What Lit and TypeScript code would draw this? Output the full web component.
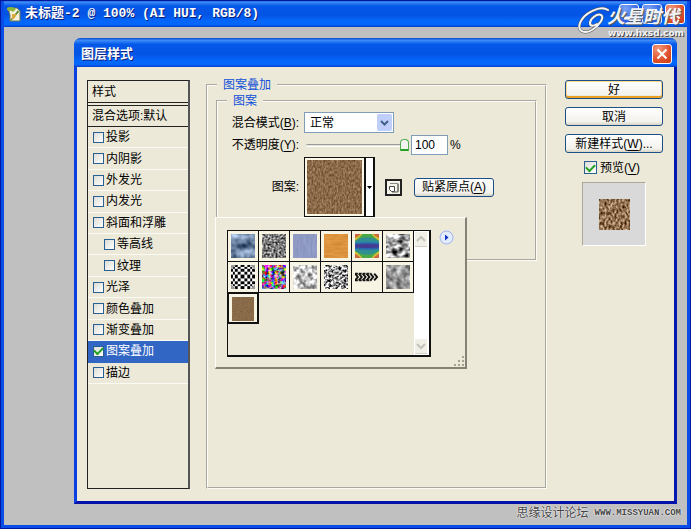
import { LitElement, html, css, svg, nothing } from "lit";
import { customElement, property, state } from "lit/decorators.js";
import { classMap } from "lit/directives/class-map.js";

/** Noise parameters: frequency, seed, then gain and mean per channel. */
interface Noise {
  freq: string;
  seed: number;
  gain: number;
  mean: [number, number, number];
  color?: boolean;
}

const NOISES: Record<string, Noise> = {
  burlap: { freq: "0.6 0.35", seed: 4, gain: 0.45, mean: [0.54, 0.42, 0.28] },
  weave: { freq: "0.5 0.3", seed: 9, gain: 1.1, mean: [0.57, 0.44, 0.32] },
  brown: { freq: "0.7", seed: 2, gain: 0.15, mean: [0.53, 0.42, 0.29] },
  bubbles: { freq: "0.13", seed: 5, gain: 0.9, mean: [0.42, 0.51, 0.64] },
  gravel: { freq: "0.5", seed: 3, gain: 1.5, mean: [0.48, 0.48, 0.48] },
  denim: { freq: "0.5 0.1", seed: 1, gain: 0.12, mean: [0.56, 0.6, 0.77] },
  wood: { freq: "0.1 0.5", seed: 1, gain: 0.14, mean: [0.86, 0.58, 0.24] },
  stones: { freq: "0.15 0.2", seed: 8, gain: 2.2, mean: [0.62, 0.62, 0.62] },
  confetti: { freq: "0.3", seed: 6, gain: 2.6, mean: [0.55, 0.45, 0.55], color: true },
  pebbles: { freq: "0.2", seed: 7, gain: 1.7, mean: [0.76, 0.76, 0.76] },
  scribble: { freq: "0.4", seed: 11, gain: 2.6, mean: [0.6, 0.6, 0.6] },
  fog: { freq: "0.18", seed: 12, gain: 0.9, mean: [0.6, 0.6, 0.6] },
};

@customElement("pattern-swatch")
class PatternSwatch extends LitElement {
  @property() kind = "burlap";

  static styles = css`
    :host { display: block; }
    svg { display: block; width: 100%; height: 100%; }
  `;

  private noise(n: Noise) {
    const rows = n.mean
      .map((m, i) => {
        const w = [0, 0, 0];
        w[n.color ? i : 0] = n.gain;
        return `${w.join(" ")} 0 ${(m - n.gain / 2).toFixed(2)}`;
      })
      .join(" ");
    return svg`
      <filter id="f" x="0" y="0" width="100%" height="100%" color-interpolation-filters="sRGB">
        <feTurbulence type="fractalNoise" baseFrequency=${n.freq} numOctaves="2" seed=${n.seed}/>
        <feColorMatrix values=${rows + " 0 0 0 0 1"}/>
      </filter>
      <rect width="100%" height="100%" filter="url(#f)"/>`;
  }

  private drawn() {
    if (this.kind === "checker") {
      const xs = [0, 2, 4, 7, 10, 14, 17, 20, 22, 25];
      const cells = [];
      for (let r = 0; r < 9; r++)
        for (let c = 0; c < 9; c++)
          if ((r + c) % 2 === 0)
            cells.push(svg`<rect x=${xs[c]} y=${xs[r]} width=${xs[c + 1] - xs[c]} height=${xs[r + 1] - xs[r]}/>`);
      return svg`<rect width="25" height="25" fill="#fff"/>${cells}
        <path d="M0 0H5L0 5ZM25 0V5L20 0ZM0 25V20L5 25ZM25 25H20L25 20Z" fill="#999"/>`;
    }
    if (this.kind === "rainbow")
      return svg`
        <defs><filter id="b" x="0" y="0" width="100%" height="100%"><feGaussianBlur stdDeviation="0.8"/></filter></defs>
        <rect width="25" height="25" fill="#2f8f94"/>
        <g filter="url(#b)">
          <path d="M-2-2H27V9Q12.500-2-2 9ZM-2 27H27V16Q12.500 27-2 16Z" fill="#4ca84a"/>
          <path d="M-2-2H9Q6 4-2 8ZM27-2H16Q19 4 27 8ZM-2 27H9Q6 21-2 17ZM27 27H16Q19 21 27 17Z" fill="#d0c03a"/>
          <path d="M-2-2H7Q5 3-2 5ZM27-2H18Q20 3 27 5ZM-2 27H7Q5 22-2 20ZM27 27H18Q20 22 27 20Z" fill="#d0683c"/>
          <path d="M-2 10Q12.500 7 27 10V15Q12.500 18-2 15Z" fill="#2b66b0"/>
          <path d="M-2 11Q12.500 10 27 11V14Q12.500 15-2 14Z" fill="#443a90"/>
        </g>`;
    const marks = [0, 4, 8, 12, 16, 20].map(
      (x) => svg`<path d=${`M${x} 9L${x + 3} 12.500L${x} 16`}/>`
    );
    return svg`<g fill="none" stroke="#111" stroke-width="2">${marks}
      <path d="M0 9H17M0 16H17" stroke-dasharray="3 1"/></g>`;
  }

  render() {
    const n = NOISES[this.kind];
    return n
      ? html`<svg aria-hidden="true">${this.noise(n)}</svg>`
      : html`<svg viewBox="0 0 25 25" aria-hidden="true">${this.drawn()}</svg>`;
  }
}

@customElement("caption-button")
class CaptionButton extends LitElement {
  @property() kind: "min" | "max" | "close" = "close";

  static styles = css`
    :host { display: block; }
    button {
      display: block; width: 20px; height: 20px; padding: 0;
      border: 1px solid #fff; border-radius: 3px;
      background: radial-gradient(circle at 30% 20%, #7da4f6, #2c5fe0 70%, #2450c8);
    }
    .close { background: radial-gradient(circle at 30% 20%, #f0997c, #e0502c 60%, #c63a14); }
    svg { display: block; width: 18px; height: 18px; }
  `;

  render() {
    const shape = {
      min: svg`<path d="M4 13h7" stroke-width="3"/>`,
      max: svg`<path d="M4 5h10M4.500 5v9h9V5" stroke-width="2"/>`,
      close: svg`<path d="M4.500 4.500l9 9M13.500 4.500l-9 9" stroke-width="2"/>`,
    }[this.kind];
    const label = { min: "最小化", max: "最大化", close: "关闭" }[this.kind];
    return html`<button class=${this.kind} aria-label=${label}>
      <svg viewBox="0 0 18 18" fill="none" stroke="#fff">${shape}</svg>
    </button>`;
  }
}

interface Effect {
  name: string;
  sub?: boolean;
}

const EFFECTS: Effect[] = [
  { name: "投影" },
  { name: "内阴影" },
  { name: "外发光" },
  { name: "内发光" },
  { name: "斜面和浮雕" },
  { name: "等高线", sub: true },
  { name: "纹理", sub: true },
  { name: "光泽" },
  { name: "颜色叠加" },
  { name: "渐变叠加" },
  { name: "图案叠加" },
  { name: "描边" },
];

const PATTERNS = [
  "bubbles", "gravel", "denim", "wood", "rainbow", "stones",
  "checker", "confetti", "pebbles", "scribble", "arrows", "fog",
  "brown",
];

@customElement("app-root")
class AppRoot extends LitElement {
  @state() private current = "图案叠加";
  @state() private pattern = "brown";

  static styles = css`
    :host {
      display: flex; flex-direction: column; position: relative;
      box-sizing: border-box; min-height: 100vh;
      border: solid #0a4ce8; border-width: 0 4px 4px;
      background: #c0c0c0; color: #000;
      font: 12px/16px "Liberation Sans", "Noto Sans CJK SC", sans-serif;
      outline: 1px solid #00189c; outline-offset: -1px;
    }
    * { box-sizing: border-box; }
    button, input, select { font: inherit; color: inherit; margin: 0; }
    u { text-underline-offset: 2px; }

    .bar {
      display: flex; align-items: center; gap: 3px;
      color: #fff; font-weight: bold; font-size: 13px; white-space: nowrap;
      text-shadow: 1px 1px 0 #0a1f7a;
      background: linear-gradient(#0848c8, #3c8cf8 8%, #0458e8 22%, #0454e4 55%, #0468fc 80%, #0464f8 92%, #0040c8);
    }
    .bar-title { flex: 1; margin: 0; font-size: 13px; }
    .doc-bar { height: 27px; padding: 0 2px; }
    .doc-bar .bar-title { font-family: "Liberation Mono", "Noto Sans CJK SC", monospace; }
    .doc-icon { width: 16px; height: 16px; }

    .dialog {
      flex: 1; display: flex; flex-direction: column;
      margin: 11px 10px 21px 70px;
      border: solid #0a3fe0; border-width: 0 3px 3px;
      border-right-color: #0018b0; border-bottom-color: #0010a8;
      border-radius: 7px 7px 0 0;
      background: #ece9d8;
    }
    .dialog-bar { height: 29px; padding: 3px 5px 0 7px; margin: 0 -3px; border-radius: 7px 7px 0 0; }
    .body {
      flex: 1; display: grid; grid-template-columns: 103px 1fr 100px; gap: 16px;
      padding: 13px 11px 12px 10px;
    }

    .styles { border: 1px solid #222; border-right: 2px solid #555; }
    .styles-head { height: 22px; padding: 3px 4px; border-bottom: 1px solid #222; }
    .styles-blend { height: 22px; margin-top: 2px; padding: 2px 4px; border: solid #222; border-width: 1px 0; }
    .effects { display: grid; grid-auto-rows: 1fr; height: 257px; margin: 0; padding: 0; list-style: none; }
    .effect { display: flex; align-items: center; padding-left: 5px; border-bottom: 1px solid #fbfaf4; }
    .effect.sub { padding-left: 16px; }
    .effect.current { background: #3166c5; color: #fff; border-bottom-color: #3166c5; }
    .check { display: flex; align-items: center; gap: 2px; }

    .box {
      appearance: none; display: grid; place-items: center;
      width: 11px; height: 11px; border: 1px solid #2a5f94;
      background: linear-gradient(135deg, #dcdcd6, #fff);
    }
    .box:checked::after {
      content: ""; width: 7px; height: 4px; margin-bottom: 2px;
      border: solid #21a121; border-width: 0 0 2px 2px; transform: rotate(-45deg);
    }
    .box.large { width: 13px; height: 13px; }

    fieldset { margin: 0; min-width: 0; border: 2px groove #fdfcf4; }
    legend { color: #1050d8; padding: 0 6px; }
    .outer { padding: 0 8px; margin-top: -3px; }
    .outer > legend { margin-left: 1px; }
    .inner { padding: 3px 0 42px 13px; }
    .inner > legend { margin-left: -4px; }

    .form {
      display: grid; grid-template-columns: 68px 1fr; gap: 2px 5px;
      grid-template-rows: 21px 20px 60px; align-items: center;
    }
    .form-label { text-align: right; white-space: nowrap; }
    .line { display: flex; align-items: center; }

    .combo { display: grid; width: 90px; height: 21px; }
    .combo > * { grid-area: 1 / 1; }
    .combo select {
      appearance: none; padding: 0 20px 0 5px; border: 1px solid #7f9db9;
      border-radius: 0; background: #fff;
    }
    .combo svg {
      justify-self: end; align-self: center; width: 15px; height: 17px; margin-right: 2px;
      pointer-events: none; border-radius: 2px; background: #bfcffa;
    }

    .slider { appearance: none; width: 103px; height: 16px; margin-left: 2px; background: none; }
    .slider::-webkit-slider-runnable-track {
      height: 3px; border-top: 1px solid #9d9c99; border-bottom: 1px solid #fff;
      background: #e4e2d8; border-radius: 2px;
    }
    .slider::-webkit-slider-thumb {
      appearance: none; width: 9px; height: 12px; margin-top: -6px;
      border: 1px solid #4fae4f; border-bottom: 2px solid #21a121;
      border-radius: 4px 4px 1px 1px; background: #f3f3ef;
    }
    .num {
      width: 37px; height: 20px; margin: 0 2px; padding: 0 3px;
      border: 1px solid #7f9db9; background: #fff;
    }

    .picker { position: relative; display: flex; width: 71px; height: 60px; border: 1px solid #111; margin-right: 10px; }
    .picker-face { width: 59px; padding: 2px; border: 0; background: #fbf8e8; }
    .picker-face pattern-swatch { height: 54px; }
    .picker-drop {
      flex: 1; display: grid; place-items: center; padding: 0;
      border: solid #111; border-width: 0 1px 0 2px; background: #fff;
    }
    .picker-drop svg { width: 5px; height: 3px; }

    .new-preset { width: 17px; height: 17px; padding: 0; margin-right: 12px; border: 2px solid #222; background: #f6f4ea; }
    .new-preset svg { display: block; width: 13px; height: 13px; }

    .push {
      height: 19px; padding: 0 7px; line-height: 16px; white-space: nowrap;
      border: 1px solid #1c4f86; border-radius: 3px;
      background: linear-gradient(#fff, #f3f2ec 80%, #d8d3c6);
    }
    .push.default { box-shadow: inset 0 -2px 0 #e8a020, inset 0 0 0 1px #fbd890; }

    .popup {
      position: absolute; z-index: 1; top: 59px; left: -90px;
      width: 252px; height: 152px; display: flex; gap: 8px; padding: 12px 10px 12px 11px;
      border: 1px solid #fffef6; border-right: 2px solid #858275; border-bottom: 2px solid #858275;
      background: #ece9d8;
    }
    .presets { display: flex; width: 204px; height: 127px; border: 1px solid #111; border-right-width: 2px; border-bottom-width: 2px; }
    .tiles {
      flex: 1; display: grid; grid-template-columns: repeat(6, 31px);
      grid-auto-rows: 31px; align-content: start;
    }
    .tile { padding: 2px; border: solid #111; border-width: 0 1px 1px 0; background: #f8f4e4; }
    .tile.chosen { margin: -1px 0 0 -1px; border-width: 2px; }
    .tile pattern-swatch { height: 26px; border: 1px solid #f8f4e4; }
    .scroll { display: flex; flex-direction: column; justify-content: space-between; width: 15px; padding: 1px; background: #fff; }
    .scroll button { width: 12px; height: 15px; padding: 0; border: 0; border-bottom: 1px solid #d0cfc6; background: #f0efe8; }
    .scroll svg { display: block; width: 12px; height: 14px; }
    .flyout { width: 15px; height: 15px; padding: 0; border: 0; background: none; }
    .flyout svg { display: block; width: 15px; height: 15px; }
    .grip { position: absolute; right: 0; bottom: 0; width: 12px; height: 12px; }

    .actions { display: flex; flex-direction: column; gap: 8px; padding-left: 2px; }
    .preview-check { display: flex; justify-content: center; align-items: center; gap: 3px; height: 13px; margin-right: 4px; }
    .preview {
      align-self: center; display: grid; place-items: center; width: 64px; height: 64px;
      border: 1px solid #aca899; border-right-color: #fff; border-bottom-color: #fff;
      background: #d9d9d9;
    }
    .preview pattern-swatch { width: 31px; height: 31px; }

    .logo { position: absolute; top: 5px; right: 0; width: 112px; height: 32px; color: #f2f3f6; }
    .logo-mark { position: absolute; left: 2px; top: 1px; width: 36px; height: 28px; }
    .logo-name {
      position: absolute; left: 32px; top: 2px;
      font: italic bold 18px/20px "Liberation Sans", "Noto Sans CJK SC", sans-serif;
      white-space: nowrap; text-shadow: 1px 1px 1px #555;
    }
    .logo-site {
      position: absolute; right: 3px; top: 23px; font: bold 9px/10px "DejaVu Sans", sans-serif;
      text-shadow: 1px 1px 0 #444;
    }
    .credit {
      position: absolute; right: 6px; bottom: 3px; display: flex; align-items: center; gap: 6px;
      color: #444; text-shadow: 0 0 2px #fff, 0 0 1px #fff; line-height: 18px;
    }
    .credit-site { font: bold 9px/12px "Liberation Mono", monospace; }
  `;

  private effectRow(e: Effect) {
    const on = e.name === this.current;
    return html`<li class=${classMap({ effect: true, sub: !!e.sub, current: on })}>
      <label class="check" @click=${() => (this.current = e.name)}>
        <input class="box" type="checkbox" .checked=${on} />${e.name}
      </label>
    </li>`;
  }

  private tile(kind: string) {
    return html`<button
      class=${classMap({ tile: true, chosen: kind === this.pattern })}
      aria-label="图案"
      @click=${() => (this.pattern = kind)}
    ><pattern-swatch kind=${kind}></pattern-swatch></button>`;
  }

  private popup() {
    return html`<div class="popup">
      <div class="presets">
        <div class="tiles">${PATTERNS.map((p) => this.tile(p))}</div>
        <div class="scroll">
          <button aria-label="向上"><svg viewBox="0 0 12 14" fill="none" stroke="#c4c2b8" stroke-width="2"><path d="M2 9l4-4 4 4"/></svg></button>
          <button aria-label="向下"><svg viewBox="0 0 12 14" fill="none" stroke="#c4c2b8" stroke-width="2"><path d="M2 5l4 4 4-4"/></svg></button>
        </div>
      </div>
      <button class="flyout" aria-label="菜单">
        <svg viewBox="0 0 15 15"><circle cx="7.500" cy="7.500" r="6.500" fill="#e4ecff" stroke="#9fb4f0"/><path d="M6 4.500v6L9.500 7.500z" fill="#1030c8"/></svg>
      </button>
      <svg class="grip" viewBox="0 0 12 12" fill="#a5a292"><path d="M9 1h2v2H9zM5 5h2v2H5zM9 5h2v2H9zM1 9h2v2H1zM5 9h2v2H5zM9 9h2v2H9z"/></svg>
    </div>`;
  }

  private patternGroup() {
    return html`<fieldset class="inner">
      <legend>图案</legend>
      <div class="form">
        <label class="form-label" for="mode">混合模式(<u>B</u>):</label>
        <div class="combo">
          <select id="mode"><option>正常</option></select>
          <svg viewBox="0 0 15 17" fill="none" stroke="#44608c" stroke-width="2"><path d="M4 7l3.500 3.500L11 7"/></svg>
        </div>
        <label class="form-label" for="opacity">不透明度(<u>Y</u>):</label>
        <div class="line">
          <input class="slider" type="range" min="0" max="100" value="100" aria-label="不透明度" />
          <input class="num" id="opacity" type="text" value="100" />%
        </div>
        <span class="form-label">图案:</span>
        <div class="line">
          <div class="picker">
            <button class="picker-face" aria-label="图案"><pattern-swatch kind="burlap"></pattern-swatch></button>
            <button class="picker-drop" aria-label="选择图案"><svg viewBox="0 0 5 3"><path d="M0 0h5L2.500 3z"/></svg></button>
            ${this.popup()}
          </div>
          <button class="new-preset" aria-label="新建预设">
            <svg viewBox="0 0 13 13" fill="none"><path d="M3 2.500h8v8" stroke="#888"/><path d="M2.500 5.500h5v5h-3l-2-2z" fill="#fff" stroke="#444"/><path d="M11 3v8H5" stroke="#555" stroke-width="1"/></svg>
          </button>
          <button class="push">贴紧原点(<u>A</u>)</button>
        </div>
      </div>
    </fieldset>`;
  }

  render() {
    return html`
      <header class="bar doc-bar">
        <svg class="doc-icon" viewBox="0 0 16 16">
          <path d="M2 2h9l3 3v10H4V9z" fill="#f4f2dc" stroke="#70744c" stroke-width="1"/>
          <path d="M1 2c3-2 7-1 9 1L7 6C5 4 3 5 1 4z" fill="#8ab53c"/>
          <path d="M12 4L5 13l-1 2 2-1 7-8z" fill="#5d8a3a"/>
          <path d="M6 8h5l-3 5H6z" fill="#d8a83c"/>
        </svg>
        <h1 class="bar-title">未标题-2 @ 100% (AI HUI, RGB/8)</h1>
        <caption-button kind="min"></caption-button>
        <caption-button kind="max"></caption-button>
        <caption-button kind="close"></caption-button>
      </header>

      <section class="dialog" role="dialog" aria-label="图层样式">
        <header class="bar dialog-bar">
          <h2 class="bar-title">图层样式</h2>
          <caption-button kind="close"></caption-button>
        </header>
        <div class="body">
          <nav class="styles">
            <div class="styles-head">样式</div>
            <div class="styles-blend">混合选项:默认</div>
            <ul class="effects">${EFFECTS.map((e) => this.effectRow(e))}</ul>
          </nav>
          <fieldset class="outer">
            <legend>${this.current || nothing}</legend>
            ${this.patternGroup()}
          </fieldset>
          <div class="actions">
            <button class="push default">好</button>
            <button class="push">取消</button>
            <button class="push">新建样式(<u>W</u>)...</button>
            <label class="preview-check"><input class="box large" type="checkbox" checked /><span>预览(<u>V</u>)</span></label>
            <div class="preview"><pattern-swatch kind="weave"></pattern-swatch></div>
          </div>
        </div>
      </section>

      <div class="logo">
        <svg class="logo-mark" viewBox="0 0 36 28" fill="none" stroke-linecap="round">
          <path d="M31 4C23-1 7 7 3 17c-3 9 5 11 12 7s13-13 9-15-11 4-11 8 4 3 7 1" stroke="#555" stroke-width="3"/>
          <path d="M31 4C23-1 7 7 3 17c-3 9 5 11 12 7s13-13 9-15-11 4-11 8 4 3 7 1" stroke="#f4f5f8" stroke-width="2"/>
        </svg>
        <span class="logo-name">火星时代</span>
        <span class="logo-site">www.hxsd.com</span>
      </div>
      <div class="credit"><span>思缘设计论坛</span><span class="credit-site">WWW.MISSYUAN.COM</span></div>
    `;
  }
}
